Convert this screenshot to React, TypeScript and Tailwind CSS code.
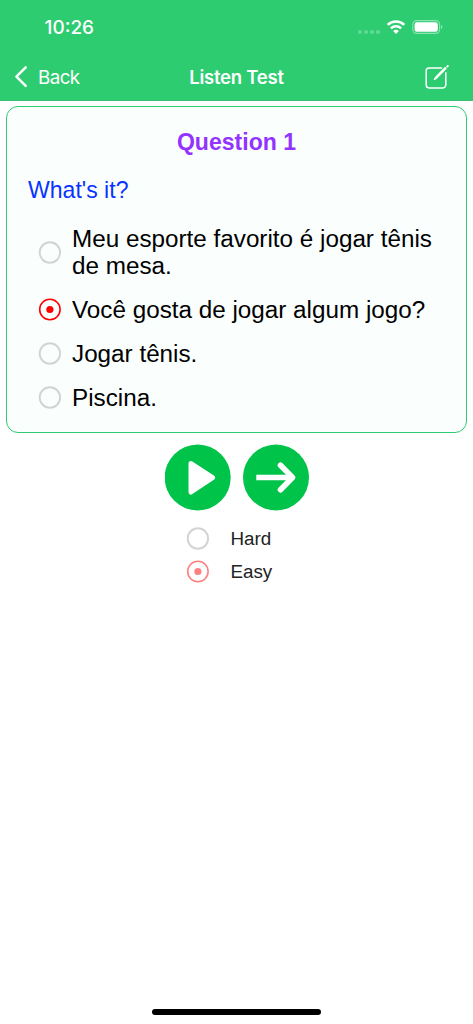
import { useState } from "react";

const options = [
  "Meu esporte favorito é jogar tênis de mesa.",
  "Você gosta de jogar algum jogo?",
  "Jogar tênis.",
  "Piscina.",
];

function Radio({ checked, color }: { checked: boolean; color: string }) {
  return (
    <svg width="24" height="24" viewBox="0 0 24 24" fill="none" className="shrink-0">
      <circle cx="11.9" cy="12.5" r="10.2" stroke={checked ? color : "#d3d3d3"} strokeWidth={checked ? 1.6 : 1.9} />
      {checked && <circle cx="11.9" cy="12.5" r="3.6" fill={color} />}
    </svg>
  );
}

function StatusBar() {
  return (
    <div className="flex h-[54px] items-center justify-between pr-[30px] pl-[44.5px]">
      <span className="pt-px text-[19px] leading-6 font-medium">10:26</span>
      <svg width="86" height="20" viewBox="357 17 86 20" fill="none">
        <g fill="#fff" fillOpacity="0.25">
          <circle cx="360" cy="32" r="2.1" />
          <circle cx="366" cy="32" r="2.1" />
          <circle cx="372" cy="32" r="2.1" />
          <circle cx="378" cy="32" r="2.1" />
        </g>
        <path d="M387.7 24.9a12 12 0 0 1 16.6 0" stroke="#fff" strokeWidth="2.6" />
        <path d="M390.9 28.4a7.3 7.3 0 0 1 10.2 0" stroke="#fff" strokeWidth="2.5" />
        <path d="M393.1 31.1a4.2 4.2 0 0 1 5.8 0L396 34Z" fill="#fff" />
        <rect x="412.8" y="20.6" width="26.8" height="12.8" rx="3.8" stroke="#fff" strokeOpacity="0.45" strokeWidth="1.1" />
        <rect x="414.6" y="22.2" width="23.2" height="9.6" rx="2.2" fill="#fff" />
        <path d="M441 25.1c1.8.7 1.8 3.2 0 3.9Z" fill="#fff" fillOpacity="0.5" />
      </svg>
    </div>
  );
}

function NavBar() {
  return (
    <div className="grid h-[45px] grid-cols-[1fr_auto_1fr] items-center px-[14px]">
      <button className="flex items-center text-[18.8px] leading-6 tracking-[-0.6px]">
        <svg width="14" height="24" viewBox="0 0 14 24" fill="none" className="mr-[10px]">
          <path d="M11.7 2.4 2.4 11.6l9.3 9.2" stroke="#fff" strokeWidth="2.5" strokeLinecap="round" strokeLinejoin="round" />
        </svg>
        <span className="pt-0.5">Back</span>
      </button>
      <h1 className="text-[18.5px] leading-6 font-semibold tracking-[-0.25px]">Listen Test</h1>
      <button className="mr-[9px] justify-self-end" aria-label="Edit">
        <svg width="26" height="26" viewBox="424 63 26 26" fill="none" stroke="#fff" strokeWidth="1.5" strokeLinecap="round" strokeLinejoin="round">
          <path d="M441.5 67.1H429a2.8 2.8 0 0 0-2.8 2.8v14.2a2.8 2.8 0 0 0 2.8 2.8h14a2.8 2.8 0 0 0 2.8-2.8V71.8" />
          <path d="M434.3 78.5 435.4 76.3 445.2 66.5M434.3 78.5l2.1-1.1 9.7-9.8M435.3 77.4 445.8 67" strokeWidth="1.1" />
          <path d="m447.3 65.5.5-.5" strokeWidth="2" />
        </svg>
      </button>
    </div>
  );
}

export default function App() {
  const [answer, setAnswer] = useState(1);
  const [level, setLevel] = useState("Easy");

  return (
    <div className="flex h-[1024px] w-full flex-col bg-white font-['Liberation_Sans',Arial,sans-serif]">
      <header className="h-[101px] shrink-0 border-b border-[#3bbd71] bg-[#2ecc71] font-['Inter',sans-serif] text-white">
        <StatusBar />
        <NavBar />
      </header>

      <main className="flex flex-col items-center px-1.5 pt-[5px]">
        <section className="h-[327px] w-full rounded-[12px] border border-[#2ecc71] bg-[#fafffe] px-[21px]">
          <h2 className="pt-[22px] text-center text-[23.05px] leading-[27px] font-bold text-[#9333ff]">Question 1</h2>
          <p className="mt-[21px] text-[23.05px] leading-[27px] text-[#0a33ff]">What's it?</p>
          <div className="mt-[12.4px] pl-[10px]">
            {options.map((text, i) => (
              <button key={text} onClick={() => setAnswer(i)} className="flex w-full items-center gap-[10px] py-[8.5px] text-left text-[24.26px] leading-[27px] text-black">
                <Radio checked={answer === i} color="#ff0000" />
                <span>{text}</span>
              </button>
            ))}
          </div>
        </section>

        <div className="mt-[11px] flex gap-[12px] pl-[0.5px]">
          <button aria-label="Play">
            <svg width="66" height="67" viewBox="0 0 66 67">
              <circle cx="32.7" cy="33.5" r="33" fill="#00c349" />
              <path d="M26 19.5 47.5 33.7 26 48Z" fill="#fff" stroke="#fff" strokeWidth="5" strokeLinejoin="round" />
            </svg>
          </button>
          <button aria-label="Next">
            <svg width="66" height="67" viewBox="0 0 66 67" fill="none">
              <circle cx="33" cy="33.5" r="33" fill="#00c349" />
              <path d="M13.3 33.5h35" stroke="#fff" strokeWidth="5.6" />
              <path d="M37.5 21.3l12 12.2-12 12.2" stroke="#fff" strokeWidth="5.6" strokeLinecap="round" strokeLinejoin="round" />
            </svg>
          </button>
        </div>

        <div className="mt-[10.5px] flex w-[102px] flex-col">
          {["Hard", "Easy"].map((name) => (
            <button key={name} onClick={() => setLevel(name)} className="flex h-[33.3px] items-center gap-[21px] text-[18.8px] leading-6 text-[#222]">
              <Radio checked={level === name} color="#ff8080" />
              <span className="pt-px">{name}</span>
            </button>
          ))}
        </div>
      </main>

      <div className="mx-auto mt-auto mb-[9px] h-[6px] w-[169px] rounded-full bg-black" />
    </div>
  );
}
